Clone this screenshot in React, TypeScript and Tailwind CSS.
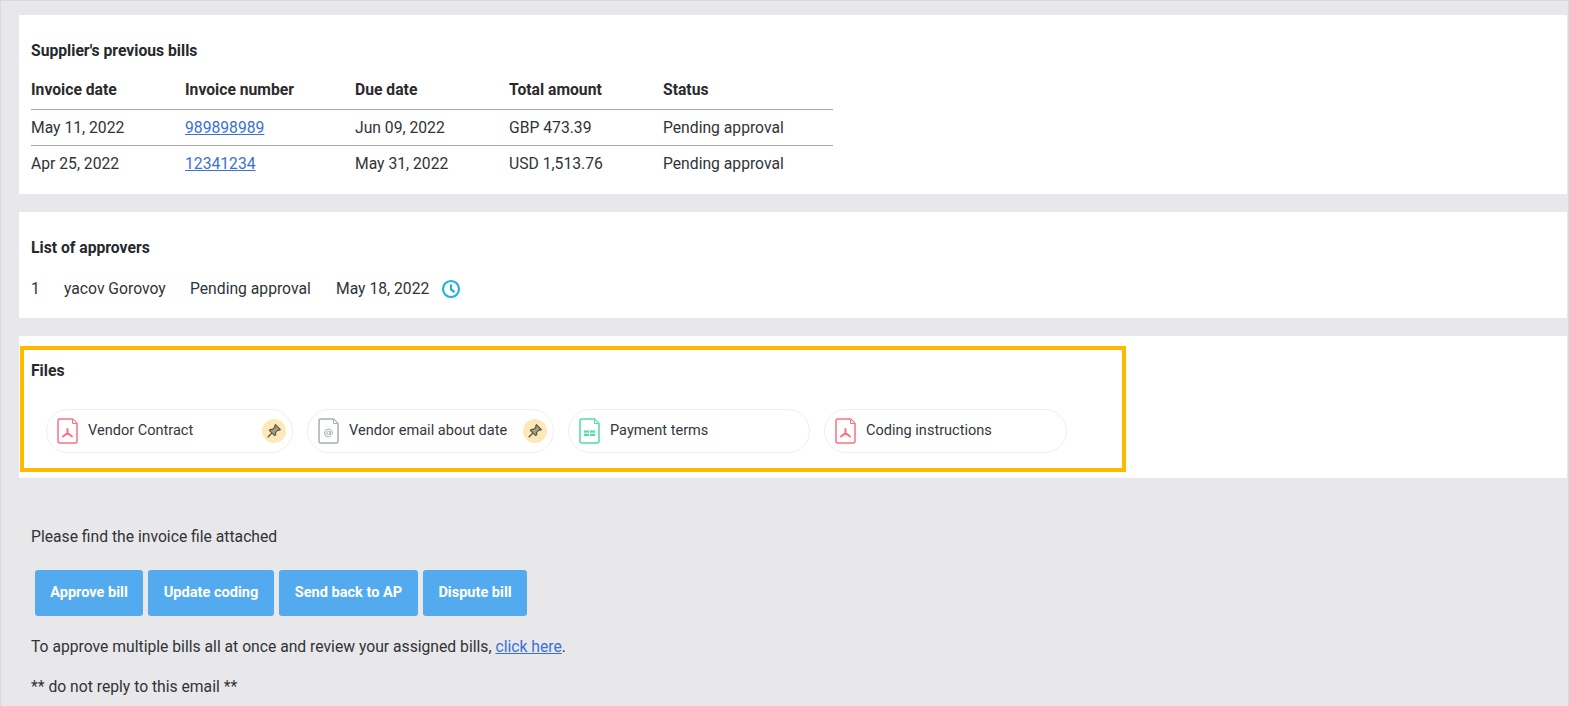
const Page = ({ c }: { c: string }) => (
  <>
    <path d="M2.500 1h13l4.500 4.500V23.500a1.500 1.500 0 0 1-1.500 1.500h-16A1.500 1.500 0 0 1 1 23.500v-21A1.500 1.500 0 0 1 2.500 1Z" stroke={c} strokeWidth="1.500" />
    <path d="M15.500 1.500V5.500h4" stroke={c} strokeWidth="1" fill="#fff" />
  </>
);
const Pdf = () => (
  <svg width="21" height="26" viewBox="0 0 21 26" fill="none" className="shrink-0">
    <Page c="#fb6f84" />
    <path d="M10.500 11v4M10.500 15 6 18.500M10.500 15l4.500 3.500" stroke="#fb6f84" strokeWidth="2" strokeLinecap="round" />
  </svg>
);
const Mail = () => (
  <svg width="21" height="26" viewBox="0 0 21 26" fill="none" className="shrink-0">
    <Page c="#a4adb5" />
    <circle cx="10.500" cy="15" r="1.700" stroke="#a4adb5" strokeWidth="1" />
    <path d="M12.200 13.300v2.500c0 1.400 2.200 1.400 2.200-.8 0-2.300-1.800-3.900-3.900-3.900a3.900 3.900 0 0 0 0 7.800c1 0 1.700-.2 2.300-.7" stroke="#a4adb5" strokeWidth="1" />
  </svg>
);
const Sheet = () => (
  <svg width="21" height="26" viewBox="0 0 21 26" fill="none" className="shrink-0">
    <Page c="#4fdca6" />
    <rect x="5" y="12.500" width="11" height="5.500" fill="#4fdca6" />
    <path d="M5 15.200h11M10.500 12.500v5.500" stroke="#fff" strokeWidth="1" />
  </svg>
);
const Pin = () => (
  <span className="flex h-[24px] w-[24px] shrink-0 items-center justify-center rounded-full bg-[#fde9b8]">
    <svg width="16" height="16" viewBox="0 0 14 14" fill="none">
      <path d="M8.300 1.500 12.500 5.700 11.300 6.400 10.500 6 8.300 8.400 8.500 10.300 7.500 11 3 6.500 3.700 5.500 5.600 5.700 8 3.500 7.600 2.700Z" fill="#a8a078" stroke="#57564a" strokeWidth="1" />
      <path d="M5 9 1.500 12.500" stroke="#57564a" strokeWidth="1.200" />
    </svg>
  </span>
);

function Chip({ icon, label, pinned, w }: { icon: React.ReactNode; label: string; pinned?: boolean; w: string }) {
  return (
    <div className={`flex h-[44px] items-center rounded-full border border-[#efefef] bg-white pl-[10px] pr-[6px] ${w}`}>
      {icon}
      <span className="ml-[10px] flex-1 text-[14.550px] text-[#33383f]">{label}</span>
      {pinned && <Pin />}
    </div>
  );
}

const bills = [
  ["May 11, 2022", "989898989", "Jun 09, 2022", "GBP 473.39", "Pending approval"],
  ["Apr 25, 2022", "12341234", "May 31, 2022", "USD 1,513.76", "Pending approval"],
];

function Btn({ children, w }: { children: React.ReactNode; w: string }) {
  return (
    <span className={`flex h-[46px] items-center justify-center rounded-[3px] bg-[#53aaef] text-[14.550px] font-bold text-white ${w}`}>
      {children}
    </span>
  );
}

export default function App() {
  return (
    <div className="relative h-[706px] w-[1569px] overflow-hidden border-l border-t border-r border-[#d9d9db] bg-[#e8e8ea] pl-[18px] pr-[1px] pt-[14px] text-[15.700px] text-[#303338] [font-family:Roboto,'Liberation_Sans',sans-serif]">
      <section className="h-[179px] bg-white pl-[12px] pt-[27px]">
        <h2 className="text-[15.700px] font-bold leading-[18px] text-[#25282d]">Supplier's previous bills</h2>
        <div className="mt-[13px] w-[802px]">
          <div className="grid h-[37px] grid-cols-[154px_170px_154px_154px_1fr] items-center border-b border-[#a8a8a8] pb-[2px] font-bold text-[#2b2b2b]">
            <span>Invoice date</span><span>Invoice number</span><span>Due date</span><span>Total amount</span><span>Status</span>
          </div>
          {bills.map((r, i) => (
            <div key={r[1]} className={`grid h-[36px] grid-cols-[154px_170px_154px_154px_1fr] items-center ${i === 0 ? "border-b border-[#a8a8a8]" : ""}`}>
              <span>{r[0]}</span>
              <a className="text-[#3b6fd6] underline">{r[1]}</a>
              <span>{r[2]}</span><span>{r[3]}</span><span>{r[4]}</span>
            </div>
          ))}
        </div>
      </section>

      <section className="mt-[18px] h-[106px] bg-white pl-[12px] pt-[27px]">
        <h2 className="text-[15.700px] font-bold leading-[18px] text-[#25282d]">List of approvers</h2>
        <div className="mt-[22px] flex h-[20px] items-center">
          <span className="w-[33px]">1</span>
          <span className="w-[126px]">yacov Gorovoy</span>
          <span className="w-[146px]">Pending approval</span>
          <span className="w-[105px]">May 18, 2022</span>
          <svg width="20" height="20" viewBox="0 0 20 20" fill="none" className="-mt-[1px]">
            <circle cx="10" cy="10" r="8" stroke="#1eb2dc" strokeWidth="2.200" />
            <path d="M10 5.500V10.500L13.500 13" stroke="#1eb2dc" strokeWidth="2.200" />
          </svg>
        </div>
      </section>

      <section className="relative mt-[18px] h-[142px] bg-white pl-[12px] pt-[26px]">
        <h2 className="text-[15.700px] font-bold leading-[18px] text-[#25282d]">Files</h2>
        <div className="ml-[15px] mt-[29px] flex gap-[14px]">
          <Chip icon={<Pdf />} label="Vendor Contract" pinned w="w-[247px]" />
          <Chip icon={<Mail />} label="Vendor email about date" pinned w="w-[247px]" />
          <Chip icon={<Sheet />} label="Payment terms" w="w-[242px]" />
          <Chip icon={<Pdf />} label="Coding instructions" w="w-[243px]" />
        </div>
        <div className="pointer-events-none absolute left-[1px] top-[10px] h-[126px] w-[1106px] border-[4px] border-[#ffb900]" />
      </section>

      <p className="ml-[12px] mt-[49px] leading-[20px]">Please find the invoice file attached</p>
      <div className="ml-[16px] mt-[23px] flex gap-[5px]">
        <Btn w="w-[108px]">Approve bill</Btn>
        <Btn w="w-[126px]">Update coding</Btn>
        <Btn w="w-[139px]">Send back to AP</Btn>
        <Btn w="w-[104px]">Dispute bill</Btn>
      </div>
      <p className="ml-[12px] mt-[21px] leading-[20px]">
        To approve multiple bills all at once and review your assigned bills, <a className="text-[#3b6fd6] underline">click here</a>.
      </p>
      <p className="ml-[12px] mt-[20px] leading-[20px]">** do not reply to this email **</p>
    </div>
  );
}
